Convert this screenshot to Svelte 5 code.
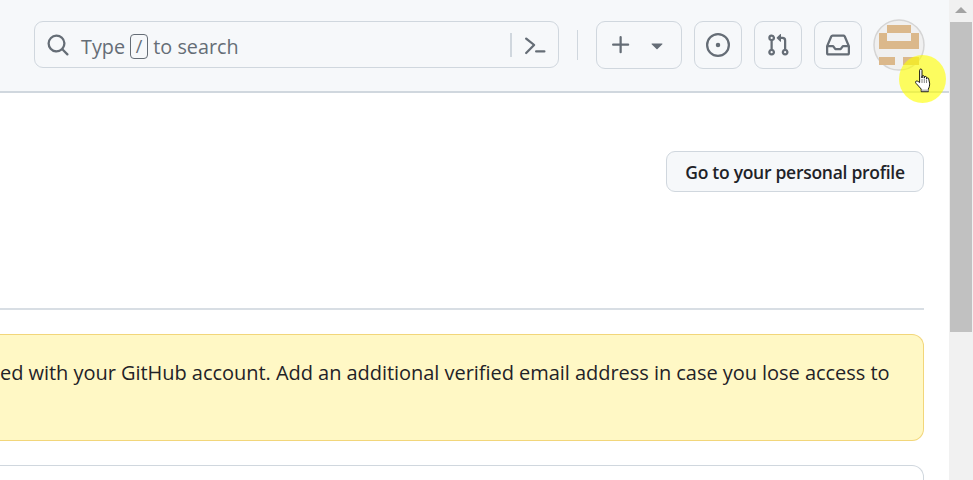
<script lang="ts">
	// octicon paths, 16 unit grid, drawn at 24px
	const icons = {
		plus: 'M7.75 2a.75.75 0 0 1 .75.75V7h4.25a.75.75 0 0 1 0 1.5H8.5v4.25a.75.75 0 0 1-1.5 0V8.5H2.75a.75.75 0 0 1 0-1.5H7V2.75A.75.75 0 0 1 7.75 2Z',
		caret: 'm4.427 7.427 3.396 3.396a.25.25 0 0 0 .354 0l3.396-3.396A.25.25 0 0 0 11.396 7H4.604a.25.25 0 0 0-.177.427Z',
		issue: 'M8 9.5a1.5 1.5 0 1 0 0-3 1.5 1.5 0 0 0 0 3ZM8 0a8 8 0 1 1 0 16A8 8 0 0 1 8 0ZM1.5 8a6.5 6.5 0 1 0 13 0 6.5 6.5 0 0 0-13 0Z',
		pull: 'M1.5 3.25a2.25 2.25 0 1 1 3 2.122v5.256a2.251 2.251 0 1 1-1.5 0V5.372A2.25 2.25 0 0 1 1.5 3.25Zm5.677-.177L9.573.677A.25.25 0 0 1 10 .854V2.5h1A2.5 2.5 0 0 1 13.5 5v5.628a2.251 2.251 0 1 1-1.5 0V5a1 1 0 0 0-1-1h-1v1.646a.25.25 0 0 1-.427.177L7.177 3.427a.25.25 0 0 1 0-.354ZM3.75 2.5a.75.75 0 1 0 0 1.5.75.75 0 0 0 0-1.5Zm0 9.5a.75.75 0 1 0 0 1.5.75.75 0 0 0 0-1.5Zm8.25.75a.75.75 0 1 0 1.5 0 .75.75 0 0 0-1.5 0Z',
		inbox: 'M2.8 2.06A1.75 1.75 0 0 1 4.41 1h7.18c.7 0 1.333.417 1.61 1.06l2.74 6.395c.04.093.06.194.06.295v4.5A1.75 1.75 0 0 1 14.25 15H1.75A1.75 1.75 0 0 1 0 13.25v-4.5c0-.101.02-.202.06-.295Zm1.61.44a.25.25 0 0 0-.23.152L1.887 8H4.75a.75.75 0 0 1 .6.3L6.625 10h2.75l1.275-1.7a.75.75 0 0 1 .6-.3h2.863L11.82 2.652a.25.25 0 0 0-.23-.152Zm10.09 7h-2.875l-1.275 1.7a.75.75 0 0 1-.6.3h-3.5a.75.75 0 0 1-.6-.3L4.375 9.5H1.5v3.75c0 .138.112.25.25.25h12.5a.25.25 0 0 0 .25-.25Z',
		search: 'M10.68 11.74a6 6 0 0 1-7.922-8.982 6 6 0 0 1 8.982 7.922l3.04 3.04a.749.749 0 0 1-.326 1.275.749.749 0 0 1-.734-.215ZM11.5 7a4.499 4.499 0 1 0-8.997 0A4.499 4.499 0 0 0 11.5 7Z',
		palette: 'm6.354 8.04-4.773 4.773a.75.75 0 1 0 1.061 1.06L7.945 8.57a.75.75 0 0 0 0-1.06L2.642 3.206a.75.75 0 0 0-1.06 1.061L6.353 8.04ZM8.75 11.5a.75.75 0 0 0 0 1.5h5.5a.75.75 0 0 0 0-1.5h-5.5Z'
	};
	const navButtons = [icons.issue, icons.pull, icons.inbox];
</script>

<div class="page">
	<div class="content">
		<header class="topbar">
			<div class="search">
				<svg class="icon" viewBox="0 0 16 16"><path d={icons.search} /></svg>
				<span class="placeholder">Type <kbd>/</kbd> to search</span>
				<span class="search-sep"></span>
				<svg class="icon" viewBox="0 0 16 16"><path d={icons.palette} /></svg>
			</div>
			<span class="top-sep"></span>
			<button class="icon-btn create">
				<svg class="icon" viewBox="0 0 16 16"><path d={icons.plus} /></svg>
				<svg class="icon" viewBox="0 0 16 16"><path d={icons.caret} /></svg>
			</button>
			{#each navButtons as d}
				<button class="icon-btn">
					<svg class="icon" viewBox="0 0 16 16"><path {d} /></svg>
				</button>
			{/each}
			<svg class="avatar" viewBox="0 0 52 52">
				<circle cx="26" cy="26" r="25" fill="#f0f0f0" stroke="#d5d5d5" stroke-width="1.5" />
				<path
					fill="#dbb88b"
					d="M14 6h24v8h8v16H6V14h8zM14 14v8h24v-8zM6 38h16v8H6zM30 38h16v8H30z"
					fill-rule="evenodd"
				/>
			</svg>
		</header>

		<main class="body">
			<div class="actions">
				<button class="profile-btn">Go to your personal profile</button>
			</div>
			<hr />
			<div class="flash">ed with your GitHub account. Add an additional verified email address in case you lose access to</div>
			<div class="card"></div>
		</main>
	</div>

	<div class="scrollbar">
		<span class="arrow"></span>
		<span class="thumb"></span>
	</div>

	<div class="pointer-halo"></div>
	<svg class="pointer" viewBox="0 0 18 25">
		<path
			fill="#fff"
			stroke="#000"
			stroke-width="0.9"
			stroke-linejoin="round"
			d="M4.6 14.5V2.3c0-1.7 2.4-1.7 2.4 0V10V8.6c0-1.3 2.3-1.3 2.3 0v1.6V9.4c0-1.3 2.2-1.3 2.2 0v1.4c0-1.2 2.2-1.2 2.2 0l.9 4.4c.2 2.4-.4 4.3-1.3 5.8v2.7H6.2v-2.7L1.1 15.4c-1.1-1.2-.5-2.5.7-2.4.9 0 1.9 .8 2.8 1.5z"
		/>
		<path stroke="#333" stroke-width="0.6" d="M7 11v4M9.3 11v4M11.5 11.5v3.5" />
		<path fill="#bbb" d="M6.6 21.5h7v1.6h-7z" />
	</svg>
</div>

<style>
	:global(body) {
		margin: 0;
	}
	.page {
		position: relative;
		display: flex;
		width: 973px;
		height: 480px;
		overflow: hidden;
		background: #fff;
		color: #1f2328;
		font-family: 'Open Sans', 'Noto Sans', sans-serif;
	}
	.content {
		flex: 1;
		min-width: 0;
	}
	.topbar {
		display: flex;
		align-items: flex-start;
		box-sizing: border-box;
		height: 93px;
		padding: 21px 24px 0 34px;
		background: #f6f8fa;
		border-bottom: 2px solid #d0d7de;
	}
	.icon {
		width: 24px;
		height: 24px;
		flex: none;
		fill: #656d76;
	}
	.search {
		display: flex;
		align-items: center;
		box-sizing: border-box;
		width: 525px;
		height: 47px;
		padding: 0 11px;
		border: 1.5px solid #d0d7de;
		border-radius: 9px;
	}
	.placeholder {
		flex: 1;
		margin-left: 11px;
		padding-top: 3px;
		font-size: 19.8px;
		color: #656d76;
	}
	kbd {
		display: inline-block;
		box-sizing: border-box;
		width: 18px;
		height: 25px;
		font: inherit;
		font-size: 18px;
		line-height: 22px;
		text-align: center;
		border: 1.5px solid #656d76;
		border-radius: 4px;
		vertical-align: 1px;
	}
	.search-sep {
		width: 1.5px;
		height: 24px;
		margin-right: 11px;
		background: #d0d7de;
	}
	.top-sep {
		width: 1.5px;
		height: 30px;
		margin: 9px 18px 0;
		background: #d0d7de;
	}
	.icon-btn {
		display: flex;
		align-items: center;
		justify-content: center;
		box-sizing: border-box;
		width: 48px;
		height: 48px;
		margin-right: 12px;
		padding: 0;
		background: none;
		border: 1.5px solid #d0d7de;
		border-radius: 9px;
	}
	.create {
		width: 86px;
		gap: 12px;
	}
	.avatar {
		width: 52px;
		height: 52px;
		flex: none;
		margin: -2px 0 0 -1px;
	}
	.body {
		padding: 58px 25px 0 0;
	}
	.actions {
		display: flex;
		justify-content: flex-end;
	}
	.profile-btn {
		box-sizing: border-box;
		width: 258px;
		height: 41px;
		padding: 0;
		font: inherit;
		font-size: 17.5px;
		font-weight: 600;
		letter-spacing: -0.28px;
		color: #1f2328;
		background: #f6f8fa;
		border: 1.5px solid #d0d7de;
		border-radius: 9px;
	}
	hr {
		height: 1.5px;
		margin: 116px 0 24px;
		background: #d8dee4;
		border: 0;
	}
	.flash {
		box-sizing: border-box;
		height: 107px;
		padding: 22px 24px 0 0;
		font-size: 20px;
		letter-spacing: -0.04px;
		line-height: 31px;
		white-space: nowrap;
		background: #fff8c5;
		border: 1.5px solid #f2d67a;
		border-left: 0;
		border-radius: 0 12px 12px 0;
	}
	.card {
		height: 60px;
		margin-top: 24px;
		border: 1.5px solid #d0d7de;
		border-left: 0;
		border-radius: 0 12px 0 0;
	}
	.scrollbar {
		position: relative;
		flex: none;
		width: 24px;
		background: #f1f1f1;
	}
	.arrow {
		display: block;
		width: 0;
		margin: 7px auto 0;
		border: 6px solid transparent;
		border-top: 0;
		border-bottom: 6px solid #a3a3a3;
	}
	.thumb {
		display: block;
		height: 310px;
		margin: 9px 1px 0;
		background: #c1c1c1;
	}
	.pointer-halo {
		position: absolute;
		left: 899px;
		top: 55px;
		width: 47px;
		height: 48px;
		border-radius: 50%;
		background: rgba(255, 255, 0, 0.62);
	}
	.pointer {
		position: absolute;
		left: 915px;
		top: 68px;
		width: 18px;
		height: 25px;
	}
</style>
